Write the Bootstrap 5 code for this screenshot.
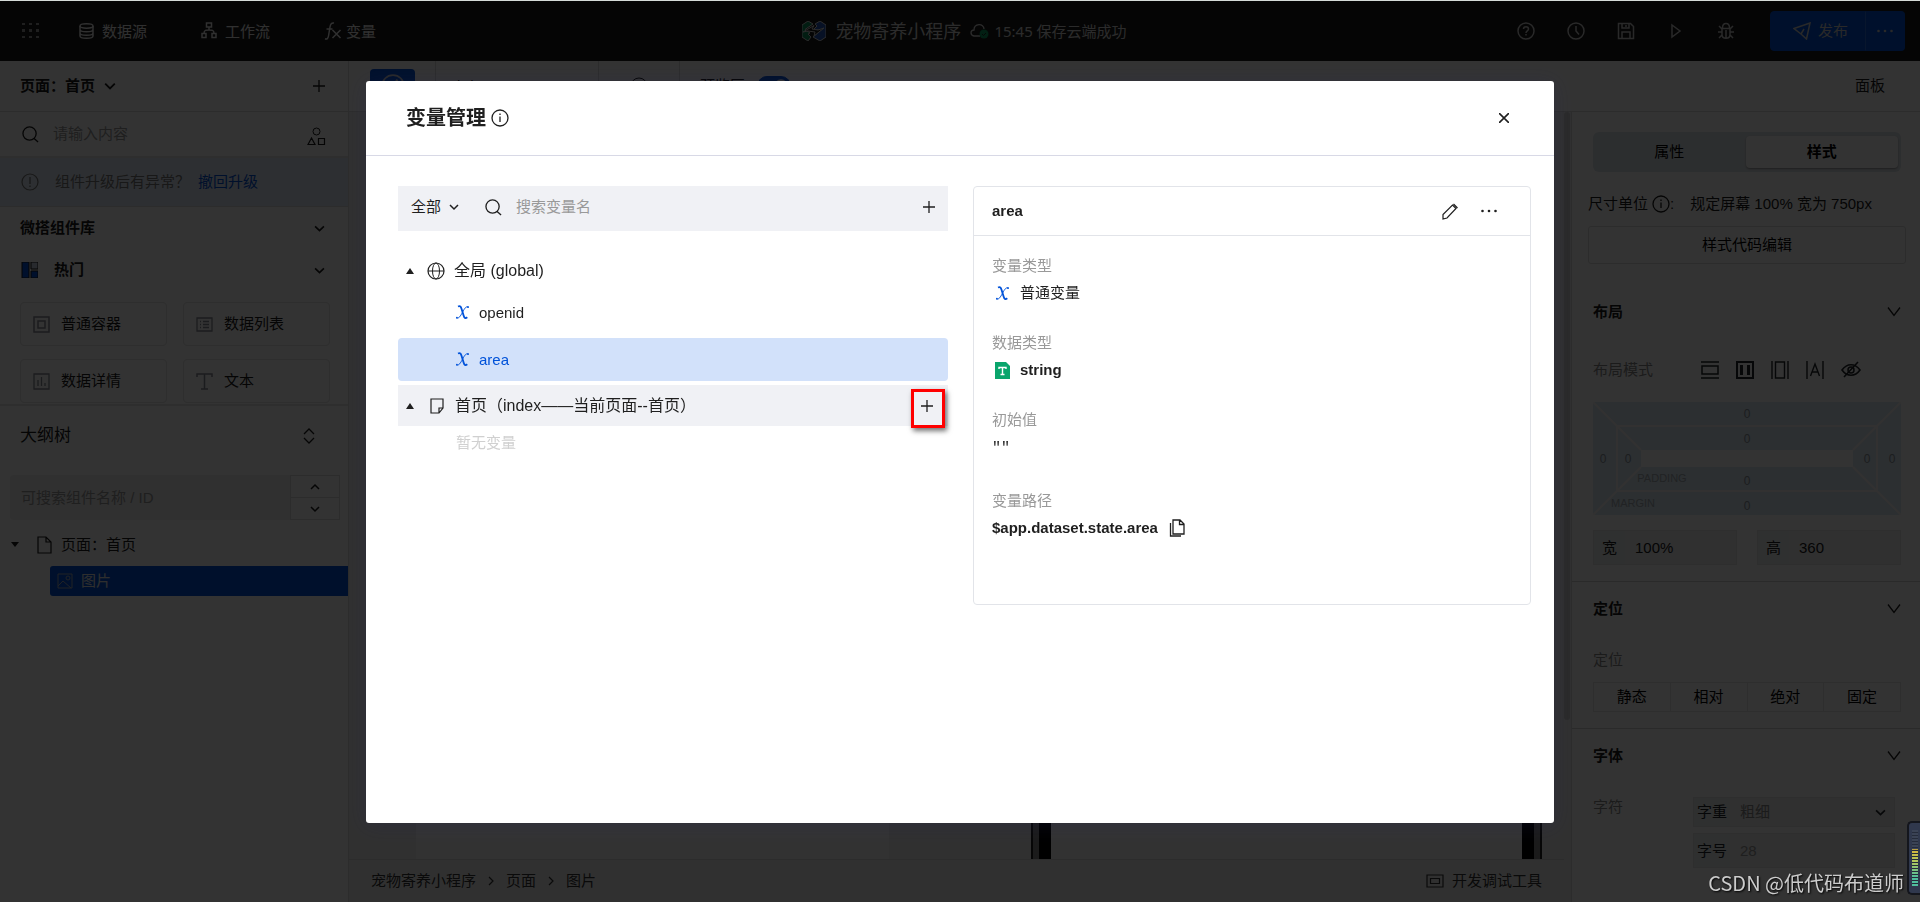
<!DOCTYPE html>
<html lang="zh-CN">
<head>
<meta charset="utf-8">
<meta name="viewport" content="width=device-width, initial-scale=1">
<title>宠物寄养小程序 - 变量管理</title>
<link href="https://cdn.jsdelivr.net/npm/bootstrap@5.3.0/dist/css/bootstrap.min.css" rel="stylesheet">
<style>
:root{--brand:#0052d9}
body{font-family:"Liberation Sans","Noto Sans CJK SC",sans-serif;font-size:15px;line-height:20px;color:#1a1a1a;background:#fff}
svg{flex:none;display:block;fill:none;stroke:currentColor}
button,input,select{font:inherit}
input,select{min-width:0}
.bare{border:0;background:none;padding:0;color:inherit;display:flex;align-items:center}
.bare-field{border:0;background:none;padding:0;outline:0;appearance:none;color:inherit}
.bare-field::placeholder{color:#999;opacity:1}
.app-shell{height:100vh;overflow:hidden}
.top-line{position:fixed;top:0;left:0;right:0;height:1px;background:#d5dbd8;z-index:1060}
.app-bar{height:61px;background:#1a1a1a;color:#f0f0f0;font-family:"Noto Sans","Noto Sans CJK SC",sans-serif;padding:0 15px 0 22px}
.app-bar a,.crumbs a{color:inherit;text-decoration:none}
.bar-side{flex:1 1 0}
.bar-nav{gap:54px;font-size:15px}
.apps-link{margin-right:-14px}
.bar-title{font-size:18px;gap:9px;color:#d8d8d8;padding-left:2px}
.bar-status{font-size:15px;gap:5px}
.bar-tools{gap:32px;color:#ccc}
.publish{height:40px;margin-left:3px}
.publish .btn{background:var(--brand);border-color:var(--brand);color:#ccc;font-size:15px;padding:0 17px 0 22px;gap:6px;border-radius:4px}
.publish .btn:last-child{padding:0 11px;border-left-color:#2a6fe0}
.side-left{width:349px;border-right:1px solid #ddd}
.strip{height:51px;border-bottom:1px solid #dcdcdc;padding:0 23px 0 20px}
.find-strip{height:46px;border-bottom:2px solid #e4e4e4;padding:0 22px}
.find-strip input{margin:0 14px}
.notice{height:49px;background:#e2ebf7;color:#777;padding:0 21px;border-bottom:1px solid #dcdcdc}
.notice a{color:var(--brand);text-decoration:none}
.group-line{height:42px;padding:0 23px 0 20px}
.tiles{gap:13px 16px;padding:11px 18px 0 20px;display:grid;grid-template-columns:1fr 1fr}
.tile{height:44px;border:1px solid #e3e3e3;border-radius:4px;padding:0 12px;gap:11px}
.tile svg{color:#888a96}
.outline-box{border-top:2px solid #e3e3e3;margin-top:1px}
.outline-head{height:60px;font-size:17px;padding:0 33px 0 20px}
.outline-find{margin:9px 8px 0 10px;height:45px;background:#eee;border-radius:4px;padding-left:11px}
.stepper{width:50px;background:#fff;border:1px solid #ddd}
.stepper button{flex:1;justify-content:center}
.stepper button+button{border-top:1px solid #ddd}
.node-root{height:42px;padding:0 11px}
.node-sel{margin-left:50px;height:30px;background:var(--brand);color:#e6e6e6;padding-left:7px;gap:8px;border-radius:3px 0 0 3px}
.stage-tools{height:51px;border-bottom:1px solid #dcdcdc;padding-left:21px}
.stage-tools>*{height:100%;display:flex;align-items:center}
.sep-r{border-right:1px solid #dcdcdc}
.eye-btn{width:45px;height:34px;background:var(--brand);color:#ccc;border-radius:4px;border:0}
.stage-tools .form-check-input{width:34px;height:20px;background-color:var(--brand);border-color:var(--brand)}
.canvas{background:#efefef;padding:0 30px 0 67px}
.paper{background:#fbfbfb;width:473px}
.phone{background:#fbfbfb;width:495px;border:solid #000;border-width:0 12px;box-shadow:0 0 0 6px #888,0 0 0 8px #222}
.crumbs{height:43px;background:#f0f0f0;border-top:1px solid #dcdcdc;padding:0 22px;gap:9px;color:#333;z-index:1}
.scroll-thumb{width:6px;background:#d0d0d0;border-radius:3px;height:77%}
.scroll-track{width:7px;background:#f0f0f0}
.side-right{width:349px;border-left:1px solid #dcdcdc}
.panel-pad{padding:0 19px 0 21px}
.seg-tabs{height:40px;margin-top:20px;background:#dde5eb;border-radius:6px;padding:4px 3px 4px 0}
.seg-tabs button{flex:1;border:0;background:none;border-radius:4px}
.seg-tabs .on{background:#fff;font-weight:700;box-shadow:0 1px 2px #999}
.unit-line{height:64px;padding-left:16px}
.code-btn{height:38px;border:1px solid #dcdcdc;border-radius:3px;background:none;margin:-10px 14px 0 16px}
.sect{height:54px}
.sect-layout{height:60px;margin-top:18px}
.mode-line{height:60px;padding-bottom:4px}
.mode-icons{gap:17px;margin-left:48px}
.sect-rule{border-top:1px solid #d2d2d2}
.muted{color:#888}
.size-fields{gap:20px;padding:15px 0 16px}
.field-box{background:#eee;height:35px;border:1px solid #e5e5e5;min-width:0}
.field-box label{background:#e8eeee;align-self:stretch;display:flex;align-items:center;justify-content:center;flex:0 0 31px}
.field-box input,.field-box select{flex:1 1 0;width:0;padding-left:10px}
.sub-label{height:46px;padding-top:14px}
.pos-group button{flex:1;height:30px;border:1px solid #e3e3e3;background:none}
.pos-group button+button{border-left:0}
.char-line{padding-top:14px}
.char-fields{width:202px;margin-right:6px;gap:6px}
.char-fields label{flex-basis:36px}
.char-fields .field-short{height:30px}
.modal-backdrop{--bs-backdrop-opacity:.8}
.var-dialog{max-width:1188px;margin:81px auto 0}
.var-dialog .modal-content{min-height:calc(100vh - 160px);border:0;border-radius:3px;box-shadow:0 2px 20px rgba(40,40,90,.25);color:#1f1f1f}
.var-dialog .modal-header{height:75px;padding:0 45px 0 40px;border-color:#d8d9e6;border-radius:0}
.var-dialog .modal-title{font-size:20px;font-weight:700;line-height:26px}
.var-dialog .modal-body{padding:30px 23px 30px 32px;gap:25px}
.var-tree,.detail{flex:1 1 0}
.var-find{height:45px;background:#f0f1f5;padding:0 13px 3px}
.var-find>svg{margin:0 14px 0 26px}
.tree-line{height:40px;padding-left:8px;font-size:16px}
.tree-global{margin-top:20px}
.ic-globe{margin:0 9px 0 13px}
.ic-page{margin:0 11px 0 16px}
.var-item{height:43px;padding-left:57px;gap:9px;border-radius:4px;text-decoration:none;color:#1f1f1f}
.ic-x{color:var(--brand)}
.var-item.active{background:#d2e1fa;color:var(--brand)}
.page-line{height:41px;background:#f0f1f5;margin-top:4px;position:relative}
.mark-box{position:absolute;right:3px;top:4px;width:34px;height:39px;border:3px solid #f00;box-shadow:2px 3px 5px rgba(0,0,0,.55);justify-content:center;padding:0 2px 5px 0}
.empty-note{padding:7px 0 0 58px;color:#d0d0d0}
.detail{border:1px solid #e2e4e9;border-radius:4px;height:419px}
.detail-head{height:49px;border-bottom:1px solid #e2e4e9;padding:0 33px 0 18px;gap:22px}
.detail dl{padding:20px 18px;margin:0}
.detail dt{font-weight:400;color:#999;margin-bottom:7px}
.detail dd{margin:0;height:50px}
.detail dd svg{margin:0 10px 0 3px}
.detail dd button svg{margin:0 0 0 11px}
.detail dd.long{height:54px}
.detail code{font:15px/20px "Liberation Mono",monospace;color:#1f1f1f}
.stamp{position:fixed;right:16px;bottom:5px;z-index:1070;color:#ccc;font-size:20px;line-height:28px;text-shadow:1px 1px 2px #000;font-family:"Noto Sans CJK SC",sans-serif}
.meter-widget{position:fixed;right:0;bottom:7px;z-index:1070;width:13px;height:74px;border:2px solid #14161d;border-right:0;border-radius:5px 0 0 5px;background:#30384d;padding:7px 2px 7px 3px}
.meter-widget div{height:100%;background:repeating-linear-gradient(transparent 0 2px,#252b3a 2px 3px),linear-gradient(#3b4355 34%,#d6b43c 35%,#b4c85a 55%,#4fbf9d 85%)}
</style>
</head>
<body>
<svg width="0" height="0" class="position-absolute" aria-hidden="true">
<defs>
<symbol id="i-down" viewBox="0 0 10 10"><path d="M1 3l4 4 4-4" stroke-width="1.5"/></symbol>
<symbol id="i-down-lg" viewBox="0 0 14 14"><path d="M1 2.500l6 8 6-8" stroke-width="1.300"/></symbol>
<symbol id="i-up" viewBox="0 0 10 10"><path d="M1 7l4-4 4 4" stroke-width="1.5"/></symbol>
<symbol id="i-right" viewBox="0 0 10 10"><path d="M3 1l4 4-4 4" stroke-width="1.200"/></symbol>
<symbol id="i-plus" viewBox="0 0 12 12"><path d="M6 0v12M0 6h12" stroke-width="1.300"/></symbol>
<symbol id="i-find" viewBox="0 0 18 18"><circle cx="8" cy="8" r="7" stroke-width="1.400"/><path d="M12.500 13l4.500 4" stroke-width="1.400"/></symbol>
<symbol id="i-info" viewBox="0 0 18 18"><circle cx="9" cy="9" r="8" stroke-width="1.300"/><path d="M9 7.500V13M9 4.500v1.500" stroke-width="1.300"/></symbol>
<symbol id="i-x" viewBox="0 0 15 15"><path d="M3 1.500C5.500.3 6 2 6.600 4l2 6.500c.7 2.500 1.700 3.300 3.700 1.800" stroke-width="1.800"/><path d="M13.500 1.700c-2.500-.5-4 1.700-6 5.500S4 13.800 1.300 13" stroke-width="1"/><circle cx="13" cy="2.200" r=".9" fill="currentColor" stroke="none"/><circle cx="1.900" cy="12.600" r=".9" fill="currentColor" stroke="none"/></symbol>
<symbol id="i-dots" viewBox="0 0 16 4"><g fill="currentColor" stroke="none"><circle cx="1.500" cy="2" r="1.300"/><circle cx="8" cy="2" r="1.300"/><circle cx="14.500" cy="2" r="1.300"/></g></symbol>
<symbol id="i-tri-up" viewBox="0 0 8 8"><path d="M4 1l4 6H0z" fill="currentColor" stroke="none"/></symbol>
<symbol id="i-panel" viewBox="0 0 18 14"><path d="M1 1h16v12H1zM4.500 4.500h9v5h-9z" stroke-width="1.200"/></symbol>
</defs>
</svg>

<div class="app-shell d-flex flex-column">
  <header class="app-bar d-flex align-items-center flex-shrink-0">
    <nav class="bar-side bar-nav d-flex align-items-center">
      <a href="#" class="apps-link" aria-label="应用"><svg width="17" height="17" viewBox="0 0 17 17"><g fill="#999" stroke="none"><path d="M0 1h3v2H0zM7 1h3v2H7zM14 1h3v2h-3zM0 7h3v3H0zM7 7h3v3H7zM14 7h3v3h-3zM0 14h3v2H0zM7 14h3v2H7zM14 14h3v2h-3z"/></g></svg></a>
      <a href="#" class="d-flex align-items-center gap-2"><svg width="15" height="16" viewBox="0 0 15 16"><ellipse cx="7.500" cy="3" rx="6.500" ry="2.200" stroke-width="1.500"/><path d="M1 3v10c0 3 13 3 13 0V3M1 6.500c0 3 13 3 13 0M1 10c0 3 13 3 13 0" stroke-width="1.500"/></svg>数据源</a>
      <a href="#" class="d-flex align-items-center gap-2"><svg width="16" height="17" viewBox="0 0 16 17"><path d="M5.500 1h5v4h-5zM1 11.500h4v4H1zM11 11.500h4v4h-4zM8 5v3M3 11.500C3 8 5 8 8 8s5 0 5 3.500" stroke-width="1.500"/></svg>工作流</a>
      <a href="#" class="d-flex align-items-center gap-1"><svg width="18" height="18" viewBox="0 0 17 18"><path d="M9.500 1C7 .5 6 2 5.500 5L4 14c-.4 2.500-1.500 3.500-3.500 2.800M2 7h6M8 8l8 8M16 8l-8 8" stroke-width="1.500"/></svg>变量</a>
    </nav>
    <div class="bar-title d-flex align-items-center">
      <svg width="24" height="20" viewBox="0 0 24 20" stroke="none"><path d="M0 4l6-4 5 3-8 5.500 5 3.500-2 1 3 3-3 4-6-4z" fill="#0a8f5c"/><path d="M24 4l-6-4-5 3 2 2-4 4h8l-8 7 7 4 6-4z" fill="#2758b8"/><path d="M1 11l11-6.500L10 8l6 1 6-2-10 8 1-4-7-1z" fill="#1a1a1a"/></svg>
      <span>宠物寄养小程序</span>
      <span class="bar-status d-flex align-items-center"><svg width="19" height="16" viewBox="0 0 19 16"><path d="M10 13H4C0 12 0 7 4 7c0-7 10-7 10-1" stroke-width="1.300"/><circle cx="14" cy="11" r="4.500" fill="#0a9c60" stroke="none"/><path d="M12 11l1.500 1.500L16 10" stroke="#222"/></svg>15:45 保存云端成功</span>
    </div>
    <div class="bar-side bar-tools d-flex align-items-center justify-content-end">
      <button class="bare" aria-label="帮助"><svg width="18" height="18" viewBox="0 0 18 18"><circle cx="9" cy="9" r="8" stroke-width="1.500"/><path d="M6.500 7c0-3 5-3 5 0 0 2-2.500 1.800-2.500 4M9 12v1.500" stroke-width="1.500"/></svg></button>
      <button class="bare" aria-label="历史"><svg width="18" height="18" viewBox="0 0 18 18"><circle cx="9" cy="9" r="8" stroke-width="1.500"/><path d="M9 4v5l3 3.500" stroke-width="1.500"/></svg></button>
      <button class="bare" aria-label="保存"><svg width="18" height="18" viewBox="0 0 18 18"><path d="M1.500 1.500h12l3 3v12h-15zM5 1.500V6h7V1.500M5 16.500V10h8v6.500M9 3v2" stroke-width="1.500"/></svg></button>
      <button class="bare" aria-label="预览"><svg width="18" height="18" viewBox="0 0 18 18"><path d="M5 3l8 6-8 6z" stroke-width="1.500"/></svg></button>
      <button class="bare" aria-label="调试"><svg width="18" height="18" viewBox="0 0 18 18"><path d="M5.500 6c0-6 7-6 7 0M5 6.500h8v6c0 5-8 5-8 0zM9 8v8M1 10h4M13 10h4M2 4l3 3M16 4l-3 3M2 16l3-3M16 16l-3-3" stroke-width="1.500"/></svg></button>
      <div class="btn-group publish">
        <button class="btn d-flex align-items-center"><svg width="19" height="18" viewBox="0 0 19 18"><path d="M1 6.500L17 1l-3.500 16L8 12zM8 12l3-5" stroke-width="1.500"/></svg>发布</button>
        <button class="btn" aria-label="更多"><svg width="16" height="4"><use href="#i-dots"/></svg></button>
      </div>
    </div>
  </header>

  <div class="d-flex flex-grow-1" style="min-height:0">
    <aside class="side-left flex-shrink-0">
      <div class="strip d-flex align-items-center">
        <button class="bare fw-bold">页面：首页<svg class="ms-2" width="14" height="12"><use href="#i-down"/></svg></button>
        <button class="bare ms-auto" aria-label="新增页面"><svg width="12" height="12"><use href="#i-plus"/></svg></button>
      </div>
      <div class="find-strip d-flex align-items-center">
        <svg width="17" height="17"><use href="#i-find"/></svg>
        <input class="bare-field flex-grow-1" placeholder="请输入内容" aria-label="搜索组件">
        <svg width="19" height="19" viewBox="0 0 19 19" class="mt-1"><circle cx="9.500" cy="4.500" r="3.500"/><path d="M1 17.500L4.500 11 8 17.500zM11.500 11.500h6v6h-6z" stroke-width="1.200"/></svg>
      </div>
      <div class="notice d-flex align-items-center"><svg class="me-3" width="18" height="18" viewBox="0 0 18 18"><circle cx="9" cy="9" r="8" stroke-width="1.200"/><path d="M9 4v7M9 12.500V14" stroke-width="1.300"/></svg>组件升级后有异常？<a href="#" class="ms-2">撤回升级</a></div>
      <div class="group-line d-flex align-items-center justify-content-between fw-bold">微搭组件库<svg width="11" height="11"><use href="#i-down"/></svg></div>
      <div class="group-line d-flex align-items-center fw-bold"><svg class="me-3" width="18" height="16" viewBox="-2 0 18 16" stroke="none"><path d="M0 0h7v16H0zM9 9h7v7H9z" fill="#0052d9"/><path d="M9 0h7v7H9z" fill="#c8d0e4"/></svg>热门<svg class="ms-auto" width="11" height="11"><use href="#i-down"/></svg></div>
      <div class="tiles">
        <div class="tile d-flex align-items-center"><svg width="17" height="17" viewBox="0 0 17 17"><path d="M1 1h15v15H1zM5 5h7v7H5z" stroke-width="1.500"/></svg>普通容器</div>
        <div class="tile d-flex align-items-center"><svg width="17" height="15" viewBox="0 0 17 15"><path d="M1 1h15v13H1zM4 4.500h1M7 4.500h6M4 7.500h1M7 7.500h6M4 10.500h1M7 10.500h6" stroke-width="1.300"/></svg>数据列表</div>
        <div class="tile d-flex align-items-center"><svg width="17" height="17" viewBox="0 0 17 17"><path d="M1 1h15v15H1zM5 7v6M8.500 4v9M12 10v3" stroke-width="1.300"/></svg>数据详情</div>
        <div class="tile d-flex align-items-center"><svg width="17" height="17" viewBox="0 0 17 17"><path d="M1 4V1h15v3M8.500 1v15M5 16h7" stroke-width="1.500"/></svg>文本</div>
      </div>
      <div class="outline-box">
        <div class="outline-head d-flex align-items-center justify-content-between">大纲树<svg width="12" height="18" viewBox="0 0 12 18"><path d="M1 7l5-5 5 5M1 11l5 5 5-5" stroke-width="1.300"/></svg></div>
        <div class="outline-find d-flex align-items-center">
          <input class="bare-field flex-grow-1" placeholder="可搜索组件名称 / ID" aria-label="可搜索组件名称">
          <div class="stepper d-flex flex-column align-self-stretch"><button class="bare" aria-label="上一个"><svg width="10" height="10"><use href="#i-up"/></svg></button><button class="bare" aria-label="下一个"><svg width="10" height="10"><use href="#i-down"/></svg></button></div>
        </div>
        <div class="node-root d-flex align-items-center mt-1"><svg width="8" height="6" viewBox="0 0 8 6"><path d="M0 0h8L4 5z" fill="currentColor" stroke="none"/></svg><svg class="ms-3 me-2" width="18" height="18" viewBox="0 0 18 18"><path d="M3 1h8l5 5v11H3zM11 1v5h5" stroke-width="1.200"/></svg>页面：首页</div>
        <div class="node-sel d-flex align-items-center"><svg width="16" height="16" viewBox="0 0 16 16" color="#a0a8b8"><path d="M1 1h14v14H1zM1 13l5-5 8 7"/><circle cx="11" cy="5" r="2"/></svg>图片</div>
      </div>
    </aside>

    <div class="d-flex flex-column flex-grow-1" style="min-width:0">
      <div class="stage-tools d-flex flex-shrink-0">
        <div class="sep-r" style="width:66px"><button class="eye-btn d-flex align-items-center justify-content-center" aria-label="设计视图"><svg width="24" height="24" viewBox="0 0 22 22"><circle cx="11" cy="11" r="10" stroke-width="1.500"/><path d="M11 12l4-7" stroke-width="2"/></svg></button></div>
        <div class="sep-r" style="width:163px;padding-left:21px">iPhone 6 100%</div>
        <div class="sep-r justify-content-center" style="width:81px"><svg width="18" height="18" viewBox="0 0 18 18"><circle cx="9" cy="9" r="8"/></svg></div>
        <label for="zone" style="padding-left:20px">预览区</label>
        <div class="form-switch" style="padding-left:12px"><input class="form-check-input m-0" id="zone" type="checkbox" role="switch" checked></div>
        <a href="#" class="ms-auto text-reset text-decoration-none" style="padding-right:35px">面板</a>
      </div>
      <div class="d-flex flex-grow-1" style="min-height:0">
        <main class="d-flex flex-column flex-grow-1" style="min-width:0">
          <div class="canvas d-flex flex-grow-1 justify-content-between overflow-hidden"><div class="paper"></div><div class="phone"></div></div>
          <nav class="crumbs d-flex align-items-center"><a href="#">宠物寄养小程序</a><svg width="12" height="10"><use href="#i-right"/></svg><a href="#">页面</a><svg width="12" height="10"><use href="#i-right"/></svg><a href="#">图片</a><a href="#" class="ms-auto d-flex align-items-center gap-2"><svg width="18" height="14"><use href="#i-panel"/></svg>开发调试工具</a></nav>
        </main>
        <div class="scroll-track"><div class="scroll-thumb"></div></div>
        <aside class="side-right flex-shrink-0">
          <div class="panel-pad"><div class="seg-tabs d-flex"><button>属性</button><button class="on">样式</button></div></div>
          <div class="unit-line d-flex align-items-center">尺寸单位<svg class="ms-1" width="18" height="18"><use href="#i-info"/></svg>:<span class="ms-3">规定屏幕 100% 宽为 750px</span></div>
          <div class="d-flex"><button class="code-btn flex-grow-1">样式代码编辑</button></div>
          <div class="panel-pad">
            <div class="sect-layout d-flex align-items-center justify-content-between fw-bold">布局<svg width="14" height="14"><use href="#i-down-lg"/></svg></div>
            <div class="mode-line d-flex align-items-center muted">布局模式
              <span class="mode-icons d-flex text-dark">
                <svg width="18" height="18" viewBox="0 0 18 18"><path d="M0 1h18M0 17h18M1 5h16v8H1z" stroke-width="1.500"/></svg>
                <svg width="18" height="18" viewBox="0 0 18 18"><path d="M1 1h16v16H1z" stroke-width="2"/><path d="M5.500 4v10M12.500 4v10" stroke-width="3"/></svg>
                <svg width="18" height="18" viewBox="0 0 18 18"><path d="M1 0v18M17 0v18M4.500 1h9v16h-9z" stroke-width="1.400"/></svg>
                <svg width="18" height="18" viewBox="0 0 18 18"><path d="M1 0v18M17 0v18M4.500 15L9 3l4.500 12M6 11h6" stroke-width="1.400"/></svg>
                <svg width="20" height="18" viewBox="0 0 20 18"><path d="M1 9c5-7 13-7 18 0-5 7-13 7-18 0zM3 16L17 1" stroke-width="1.600"/><circle cx="10" cy="9" r="3" stroke-width="1.500"/></svg>
              </span>
            </div>
            <svg width="100%" viewBox="0 0 308 113" font-size="12">
              <path d="M0 0h308v113H0z" fill="#dbe9f3" stroke="none"/>
              <path d="M48 48h212v17H48z" fill="#fff" stroke="none"/>
              <path d="M24 24h260v65H24zM0 0l48 48M308 0l-48 48M0 113l48-48M308 113l-48-48" stroke="#f8f4f4" stroke-width="2"/>
              <g fill="#8c949c" stroke="none" text-anchor="middle"><text x="154" y="16">0</text><text x="154" y="41">0</text><text x="154" y="83">0</text><text x="154" y="108">0</text><text x="10" y="61">0</text><text x="35" y="61">0</text><text x="274" y="61">0</text><text x="299" y="61">0</text><g font-size="11" fill="#a4acb2"><text x="69" y="80">PADDING</text><text x="40" y="105">MARGIN</text></g></g>
            </svg>
            <div class="size-fields d-flex">
              <div class="field-box d-flex flex-fill"><label for="w">宽</label><input id="w" class="bare-field" value="100%"></div>
              <div class="field-box d-flex flex-fill"><label for="h">高</label><input id="h" class="bare-field" value="360"></div>
            </div>
          </div>
          <div class="sect-rule panel-pad">
            <div class="sect d-flex align-items-center justify-content-between fw-bold">定位<svg width="14" height="14"><use href="#i-down-lg"/></svg></div>
            <div class="sub-label muted">定位</div>
            <div class="pos-group d-flex pb-3"><button>静态</button><button>相对</button><button>绝对</button><button>固定</button></div>
          </div>
          <div class="sect-rule panel-pad">
            <div class="sect d-flex align-items-center justify-content-between fw-bold">字体<svg width="14" height="14"><use href="#i-down-lg"/></svg></div>
            <div class="char-line d-flex justify-content-between muted"><span>字符</span>
              <div class="char-fields text-dark d-flex flex-column">
                <div class="field-box field-short d-flex align-items-center"><label for="wt">字重</label><select id="wt" class="bare-field muted"><option>粗细</option></select><svg width="11" height="11" class="me-2"><use href="#i-down"/></svg></div>
                <div class="field-box d-flex"><label for="fs">字号</label><input id="fs" class="bare-field" placeholder="28"></div>
              </div>
            </div>
          </div>
        </aside>
      </div>
    </div>
  </div>
</div>

<div class="modal-backdrop show"></div>
<div class="top-line"></div>
<div class="modal d-block overflow-hidden" tabindex="-1" role="dialog" aria-labelledby="dlg-title">
  <div class="modal-dialog var-dialog">
    <div class="modal-content">
      <div class="modal-header">
        <h1 class="modal-title" id="dlg-title">变量管理</h1><svg class="ms-1" width="20" height="18"><use href="#i-info"/></svg>
        <button class="bare ms-auto" aria-label="关闭"><svg width="10" height="10" viewBox="0 0 10 10"><path d="M0 0l10 10M10 0L0 10" stroke-width="1.600"/></svg></button>
      </div>
      <div class="modal-body d-flex align-items-start">
        <section class="var-tree">
          <div class="var-find d-flex align-items-center">
            <button class="bare">全部<svg class="ms-2" width="10" height="10"><use href="#i-down"/></svg></button>
            <svg width="17" height="17"><use href="#i-find"/></svg>
            <input class="bare-field flex-grow-1" placeholder="搜索变量名" aria-label="搜索变量名">
            <button class="bare" aria-label="新增变量"><svg width="12" height="12"><use href="#i-plus"/></svg></button>
          </div>
          <div class="tree-line tree-global d-flex align-items-center"><svg width="8" height="8"><use href="#i-tri-up"/></svg><svg class="ic-globe" width="18" height="18" viewBox="0 0 18 18"><circle cx="9" cy="9" r="8" stroke-width="1.200"/><ellipse cx="9" cy="9" rx="3.500" ry="8"/><path d="M1 9h16"/></svg>全局 (global)</div>
          <a href="#" class="var-item d-flex align-items-center"><svg class="ic-x" width="15" height="15"><use href="#i-x"/></svg>openid</a>
          <a href="#" class="var-item active d-flex align-items-center mt-1"><svg class="ic-x" width="15" height="15"><use href="#i-x"/></svg>area</a>
          <div class="tree-line page-line d-flex align-items-center"><svg width="8" height="8"><use href="#i-tri-up"/></svg><svg class="ic-page" width="14" height="16" viewBox="0 0 14 16"><path d="M1 1h12v9l-4 5H1zM13 10H9v5" stroke-width="1.200"/></svg>首页（index——当前页面--首页）<button class="bare mark-box" aria-label="新增页面变量"><svg width="12" height="12"><use href="#i-plus"/></svg></button></div>
          <div class="empty-note">暂无变量</div>
        </section>
        <section class="detail" style="flex-basis:8px">
          <div class="detail-head d-flex align-items-center fw-bold">area
            <button class="bare ms-auto" aria-label="编辑"><svg width="17" height="17" viewBox="0 0 17 17"><path d="M1 16v-4.500L10.500 2 14 5.500 5 15zM11.500 1L15.500 5" stroke-width="1.200"/></svg></button>
            <button class="bare" aria-label="更多"><svg width="16" height="4"><use href="#i-dots"/></svg></button>
          </div>
          <dl>
            <dt>变量类型</dt><dd><span class="d-flex align-items-center"><svg class="ic-x" width="15" height="15"><use href="#i-x"/></svg>普通变量</span></dd>
            <dt>数据类型</dt><dd class="fw-bold"><span class="d-flex align-items-center"><svg width="15" height="17" viewBox="0 0 15 17"><path d="M0 0h11l4 4v13H0z" fill="#0aa56c" stroke="none"/><path d="M4 7V5.500h7V7M7.500 5.500v7M5.500 12.500h4" stroke="#fff" stroke-width="1.400"/></svg>string</span></dd>
            <dt>初始值</dt><dd class="long"><code>""</code></dd>
            <dt>变量路径</dt><dd class="fw-bold"><span class="d-flex align-items-center">$app.dataset.state.area<button class="bare" aria-label="复制"><svg width="16" height="18" viewBox="0 0 16 18"><path d="M4 1h7l4 4v10H4zM10.500 1v4.500H15M1.500 4v13H12" stroke-width="1.300"/></svg></button></span></dd>
          </dl>
        </section>
      </div>
    </div>
  </div>
</div>
<div class="stamp">CSDN @低代码布道师</div>
<div class="meter-widget"><div></div></div>
<script src="https://cdn.jsdelivr.net/npm/bootstrap@5.3.0/dist/js/bootstrap.bundle.min.js"></script>
</body>
</html>
